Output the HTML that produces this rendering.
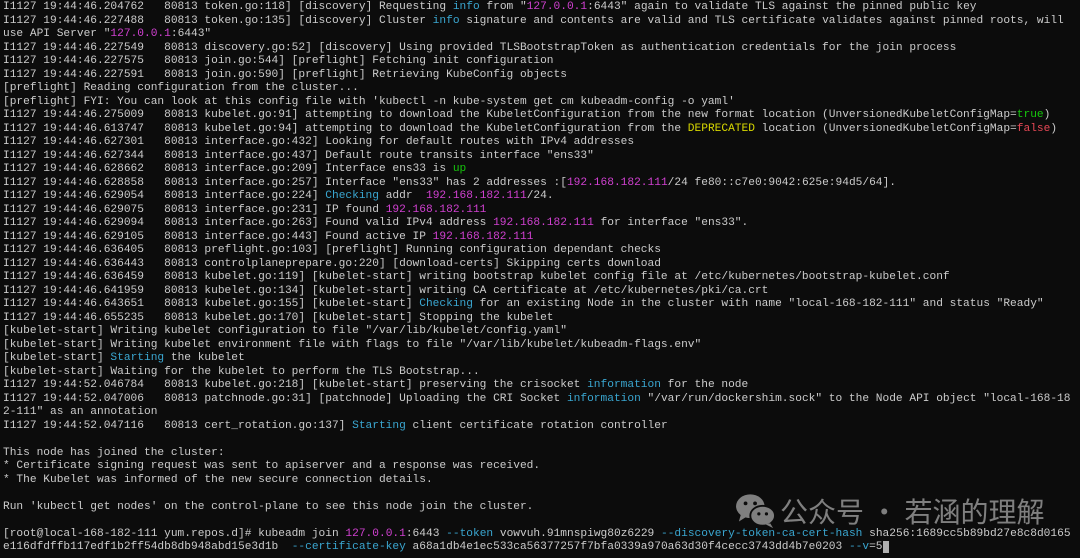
<!DOCTYPE html>
<html><head><meta charset="utf-8"><style>
html,body{margin:0;padding:0;background:#0c0c0c;width:1080px;height:558px;overflow:hidden}
pre{margin:0;padding:1px 0 0 3px;font-family:"Liberation Mono",monospace;font-size:11.2px;line-height:13.5px;color:#cccccc;white-space:pre}
.c{color:#3aa6d0}.m{color:#d040d0}.g{color:#16c60c}.y{color:#d8d800}.r{color:#e74856}
.cur{background:#b0b0b0;color:#0c0c0c}
.wm{position:absolute;left:735px;top:491px;display:flex;align-items:center;color:#8c8c8c;font-family:"Noto Sans CJK SC",sans-serif;font-size:28px;opacity:.9}
</style></head><body>
<pre>I1127 19:44:46.204762   80813 token.go:118] [discovery] Requesting <span class="c">info</span> from "<span class="m">127.0.0.1</span>:6443" again to validate TLS against the pinned public key
I1127 19:44:46.227488   80813 token.go:135] [discovery] Cluster <span class="c">info</span> signature and contents are valid and TLS certificate validates against pinned roots, will
use API Server "<span class="m">127.0.0.1</span>:6443"
I1127 19:44:46.227549   80813 discovery.go:52] [discovery] Using provided TLSBootstrapToken as authentication credentials for the join process
I1127 19:44:46.227575   80813 join.go:544] [preflight] Fetching init configuration
I1127 19:44:46.227591   80813 join.go:590] [preflight] Retrieving KubeConfig objects
[preflight] Reading configuration from the cluster...
[preflight] FYI: You can look at this config file with 'kubectl -n kube-system get cm kubeadm-config -o yaml'
I1127 19:44:46.275009   80813 kubelet.go:91] attempting to download the KubeletConfiguration from the new format location (UnversionedKubeletConfigMap=<span class="g">true</span>)
I1127 19:44:46.613747   80813 kubelet.go:94] attempting to download the KubeletConfiguration from the <span class="y">DEPRECATED</span> location (UnversionedKubeletConfigMap=<span class="r">false</span>)
I1127 19:44:46.627301   80813 interface.go:432] Looking for default routes with IPv4 addresses
I1127 19:44:46.627344   80813 interface.go:437] Default route transits interface "ens33"
I1127 19:44:46.628662   80813 interface.go:209] Interface ens33 is <span class="g">up</span>
I1127 19:44:46.628858   80813 interface.go:257] Interface "ens33" has 2 addresses :[<span class="m">192.168.182.111</span>/24 fe80::c7e0:9042:625e:94d5/64].
I1127 19:44:46.629054   80813 interface.go:224] <span class="c">Checking</span> addr  <span class="m">192.168.182.111</span>/24.
I1127 19:44:46.629075   80813 interface.go:231] IP found <span class="m">192.168.182.111</span>
I1127 19:44:46.629094   80813 interface.go:263] Found valid IPv4 address <span class="m">192.168.182.111</span> for interface "ens33".
I1127 19:44:46.629105   80813 interface.go:443] Found active IP <span class="m">192.168.182.111</span>
I1127 19:44:46.636405   80813 preflight.go:103] [preflight] Running configuration dependant checks
I1127 19:44:46.636443   80813 controlplaneprepare.go:220] [download-certs] Skipping certs download
I1127 19:44:46.636459   80813 kubelet.go:119] [kubelet-start] writing bootstrap kubelet config file at /etc/kubernetes/bootstrap-kubelet.conf
I1127 19:44:46.641959   80813 kubelet.go:134] [kubelet-start] writing CA certificate at /etc/kubernetes/pki/ca.crt
I1127 19:44:46.643651   80813 kubelet.go:155] [kubelet-start] <span class="c">Checking</span> for an existing Node in the cluster with name "local-168-182-111" and status "Ready"
I1127 19:44:46.655235   80813 kubelet.go:170] [kubelet-start] Stopping the kubelet
[kubelet-start] Writing kubelet configuration to file "/var/lib/kubelet/config.yaml"
[kubelet-start] Writing kubelet environment file with flags to file "/var/lib/kubelet/kubeadm-flags.env"
[kubelet-start] <span class="c">Starting</span> the kubelet
[kubelet-start] Waiting for the kubelet to perform the TLS Bootstrap...
I1127 19:44:52.046784   80813 kubelet.go:218] [kubelet-start] preserving the crisocket <span class="c">information</span> for the node
I1127 19:44:52.047006   80813 patchnode.go:31] [patchnode] Uploading the CRI Socket <span class="c">information</span> "/var/run/dockershim.sock" to the Node API object "local-168-18
2-111" as an annotation
I1127 19:44:52.047116   80813 cert_rotation.go:137] <span class="c">Starting</span> client certificate rotation controller

This node has joined the cluster:
* Certificate signing request was sent to apiserver and a response was received.
* The Kubelet was informed of the new secure connection details.

Run 'kubectl get nodes' on the control-plane to see this node join the cluster.

[root@local-168-182-111 yum.repos.d]# kubeadm join <span class="m">127.0.0.1</span>:6443 <span class="c">--token</span> vowvuh.91mnspiwg80z6229 <span class="c">--discovery-token-ca-cert-hash</span> sha256:1689cc5b89bd27e8c8d0165
e116dfdffb117edf1b2ff54db8db948abd15e3d1b  <span class="c">--certificate-key</span> a68a1db4e1ec533ca56377257f7bfa0339a970a63d30f4cecc3743dd4b7e0203 <span class="c">--v</span>=5<span class="cur"> </span></pre>
<div class="wm">
<svg width="42" height="38" viewBox="0 0 44 40"><ellipse cx="16" cy="15" rx="15" ry="12.5" fill="#8c8c8c"/><path d="M6 24 L4 31 L12 26Z" fill="#8c8c8c"/><ellipse cx="29" cy="25" rx="13" ry="10.5" fill="#8c8c8c" stroke="#0c0c0c" stroke-width="2"/><path d="M37 33 L40 38 L32 34Z" fill="#8c8c8c"/><circle cx="11" cy="12" r="2" fill="#0c0c0c"/><circle cx="21" cy="12" r="2" fill="#0c0c0c"/><circle cx="25" cy="23" r="1.7" fill="#0c0c0c"/><circle cx="33" cy="23" r="1.7" fill="#0c0c0c"/></svg>
<span style="margin-left:3px">公众号 · 若涵的理解</span></div>
</body></html>
